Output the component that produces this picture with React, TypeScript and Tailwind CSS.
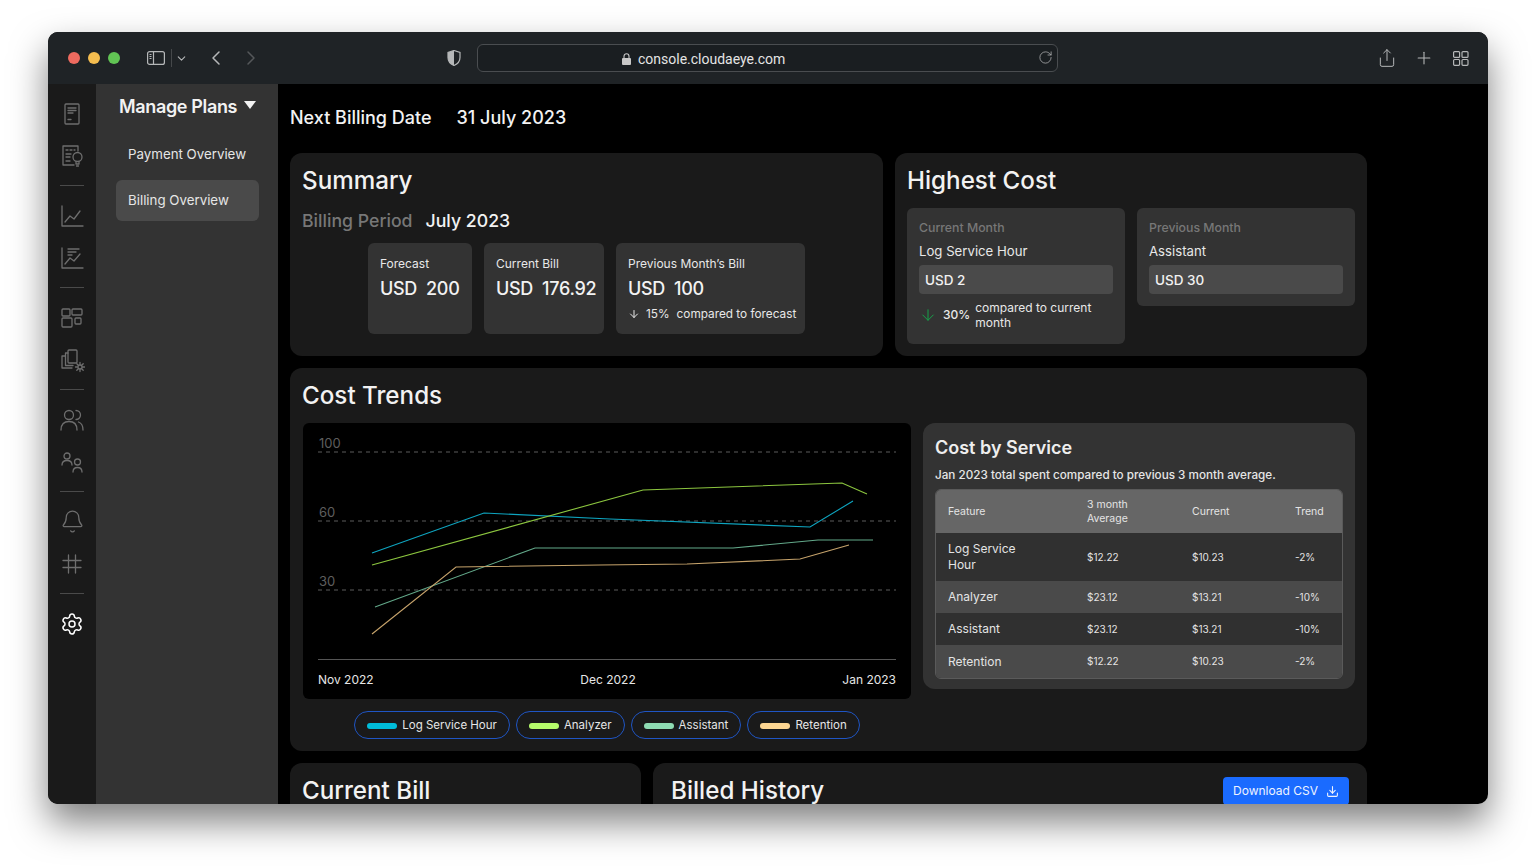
import { ArrowDown, Bell, ChevronDown, ChevronLeft, ChevronRight, Download, Plus, RotateCw, Settings, Share } from "lucide-react";
import type { ReactNode } from "react";

const font = "font-['Inter','Liberation_Sans',sans-serif]";

const Glyph = ({ children }: { children: ReactNode }) => (
  <svg width="26" height="26" viewBox="0 0 26 26" fill="none" stroke="currentColor" strokeWidth="1.3" strokeLinecap="round" strokeLinejoin="round">
    {children}
  </svg>
);

const DocIcon = () => (
  <Glyph>
    <rect x="6" y="3" width="14" height="20" rx="1" />
    <path d="M9 7h8M9 9.500h8M9 12h5M9 18.500h3" />
  </Glyph>
);

const DocBulbIcon = () => (
  <Glyph>
    <path d="M15 22H4V3h15v5" />
    <path d="M7 7h2M11 7h2M15 7h1M7 11h5M7 14h4M7 18h4" />
    <circle cx="18.500" cy="14" r="4.500" />
    <path d="M17 19.500v1.500h3v-1.500M17.500 23h2" />
  </Glyph>
);

const ChartIcon = () => (
  <Glyph>
    <path d="M3 3v20h21" />
    <path d="M6 19l5-6 4 3 6-8" />
  </Glyph>
);

const ChartListIcon = () => (
  <Glyph>
    <path d="M3 3v20h21" />
    <path d="M6 19l5-6 4 3 6-7" />
    <path d="M9 4h11M9 7h8M9 10h4" />
  </Glyph>
);

const TilesIcon = () => (
  <Glyph>
    <rect x="3" y="4" width="8" height="7" rx="1" />
    <rect x="13" y="4" width="10" height="6" rx="1" />
    <rect x="3" y="13" width="10" height="9" rx="1" />
    <rect x="16" y="13" width="6" height="6" rx="1" />
  </Glyph>
);

const CopiesGearIcon = () => (
  <Glyph>
    <rect x="9" y="3" width="9" height="13" rx="1" />
    <path d="M9 6H6.500v12.500H14M6.500 9H3v12h10" />
    <circle cx="21" cy="20" r="2" />
    <path d="M21 15.500v2M21 22.500v2M16.500 20h2M23.500 20h2M17.800 16.800l1.500 1.500M22.700 21.700l1.500 1.500M24.200 16.800l-1.500 1.500M19.300 21.700l-1.500 1.500" />
  </Glyph>
);

const UsersIcon = () => (
  <Glyph>
    <circle cx="10" cy="8" r="4.500" />
    <path d="M2 23c0-6 3-8.500 8-8.500s8 2.500 8 8.500" />
    <path d="M17 3.500a4.500 4.500 0 0 1 0 9M19.500 15c3 1 4.500 3.500 4.500 8" />
  </Glyph>
);

const PeopleIcon = () => (
  <Glyph>
    <circle cx="8" cy="7" r="3" />
    <path d="M3 16c0-3 2-4.500 5-4.500s5 1.500 5 4.500" />
    <circle cx="18.500" cy="13" r="3" />
    <path d="M14 23c0-3 1.800-4.500 4.500-4.500S23 20 23 23" />
  </Glyph>
);

const GridHashIcon = () => (
  <Glyph>
    <path d="M9.500 4v18M16.500 4v18M4 9.500h18M4 16.500h18" />
  </Glyph>
);

const railGroups: ReactNode[][] = [
  [<DocIcon />, <DocBulbIcon />],
  [<ChartIcon />, <ChartListIcon />],
  [<TilesIcon />, <CopiesGearIcon />],
  [<UsersIcon />, <PeopleIcon />],
  [<Bell size={25} strokeWidth={1.2} />, <GridHashIcon />],
];

const Rail = () => (
  <div className="flex w-12 shrink-0 flex-col items-center bg-[#1a1a1a] pt-[16.5px] text-[#6e6e6e]">
    {railGroups.map((group, i) => (
      <div key={i} className="flex flex-col items-center">
        <div className="flex flex-col items-center gap-4">
          {group.map((icon, j) => (
            <div key={j} className="flex h-[26px] w-[26px] items-center justify-center">
              {icon}
            </div>
          ))}
        </div>
        <div className="mb-[17px] mt-4 h-px w-6 bg-[#4a4a4a]" />
      </div>
    ))}
    <Settings size={24} strokeWidth={1.5} className="mt-px text-white" />
  </div>
);

const Toolbar = () => (
  <div className="flex h-[52px] shrink-0 items-center bg-[#1f2326] pl-5 text-[#b5b7b8]">
    <div className="flex gap-2">
      <div className="h-3 w-3 rounded-full bg-[#ee6a5f]" />
      <div className="h-3 w-3 rounded-full bg-[#f5bd4f]" />
      <div className="h-3 w-3 rounded-full bg-[#61c454]" />
    </div>
    <svg className="ml-[27px]" width="18" height="14" viewBox="0 0 18 14" fill="none" stroke="currentColor" strokeWidth="1.200">
      <rect x=".6" y=".6" width="16.800" height="12.800" rx="2" />
      <path d="M6.500 .6v12.800M2.500 3.500h2M2.500 5.500h2M2.500 7.500h2" />
    </svg>
    <div className="ml-[6px] h-[18px] w-px bg-[#45484a]" />
    <ChevronDown size={13} strokeWidth={2} className="ml-[3px]" />
    <ChevronLeft size={24} strokeWidth={1.5} className="ml-4" />
    <ChevronRight size={24} strokeWidth={1.5} className="ml-[11px] text-[#55585a]" />
    <svg className="ml-[184px]" width="14" height="16" viewBox="0 0 14 16">
      <path d="M7 .5 1 2.500v5c0 4 2.500 6.500 6 8 3.500-1.500 6-4 6-8v-5z" fill="none" stroke="#b5b7b8" strokeWidth="1.200" />
      <path d="M7 .5 1 2.500v5c0 4 2.500 6.500 6 8z" fill="#b5b7b8" />
    </svg>
    <div className="relative ml-4 flex h-7 w-[581px] items-center rounded-md border border-[#4a4d50] bg-[#1a1e21] pl-[144px] pt-[2px]">
      <svg className="mr-[7px]" width="9" height="12" viewBox="0 0 9 12">
        <path d="M2 5.500V3.200a2.500 2.500 0 0 1 5 0v2.300" fill="none" stroke="#c8c8c8" strokeWidth="1.100" />
        <rect y="5" width="9" height="7" rx="1" fill="#c8c8c8" />
      </svg>
      <span className="font-['Roboto',sans-serif] text-[14px] text-[#e4e4e4]">console.cloudaeye.com</span>
      <RotateCw size={15} strokeWidth={1.2} className="absolute right-[4px] top-[5px]" />
    </div>
    <Share size={20} strokeWidth={1.2} className="ml-[319px]" />
    <Plus size={20} strokeWidth={1.3} className="ml-[17px]" />
    <svg className="ml-[19px]" width="16" height="15" viewBox="0 0 16 15" fill="none" stroke="currentColor" strokeWidth="1.200">
      <rect x=".6" y=".6" width="6" height="5.800" rx="1" />
      <rect x="9" y=".6" width="6" height="5.800" rx="1" />
      <rect x=".6" y="8.500" width="6" height="5.800" rx="1" />
      <rect x="9" y="8.500" width="6" height="5.800" rx="1" />
    </svg>
  </div>
);

const Sidebar = () => (
  <div className="flex w-[182px] shrink-0 flex-col bg-[#333333] px-5 pt-[9px]">
    <div className="flex h-[26px] items-center whitespace-nowrap pl-[3px] text-[18px] font-semibold tracking-[-0.35px] text-[#f2f2f2]">
      Manage Plans
      <svg className="mb-[3px] ml-[7px]" width="12" height="8" viewBox="0 0 12 8"><path d="M0 0h12L6 8z" fill="#f2f2f2" /></svg>
    </div>
    <div className="mt-[25px] pl-3 text-[13.300px] leading-5 text-[#e6e6e6]">Payment Overview</div>
    <div className="mt-4 flex h-[41px] w-[143px] items-center rounded-md bg-[#4a4a4a] pl-3 text-[13.300px] text-[#e6e6e6]">Billing Overview</div>
  </div>
);

const Card = ({ className, children }: { className: string; children: ReactNode }) => (
  <section className={`rounded-xl bg-[#1a1a1a] ${className}`}>{children}</section>
);

const CardTitle = ({ children }: { children: ReactNode }) => (
  <h2 className="text-[24.200px] font-medium leading-8 text-[#f2f2f2]">{children}</h2>
);

const Stat = ({ label, value, amount, note }: { label: string; value?: string; amount: string; note?: boolean }) => (
  <div className="h-[91px] rounded-md bg-[#333333] px-3 pt-3 text-[#e8e8e8]">
    <div className="whitespace-nowrap text-[12px] leading-[18px]">{label}</div>
    <div className="mt-[3px] flex gap-[9px] whitespace-nowrap text-[18px] font-medium leading-[26px] tracking-[-0.3px] text-[#f2f2f2]">
      <span>{value}</span>
      <span>{amount}</span>
    </div>
    {note && (
      <div className="mt-1 flex items-center whitespace-nowrap text-[11.800px] leading-4">
        <ArrowDown size={12} className="mr-[6px] shrink-0" />
        <span className="mr-[7px]">15%</span>
        <span>compared to forecast</span>
      </div>
    )}
  </div>
);

const Summary = () => (
  <Card className="h-[203px] w-[593px] px-3 pt-3">
    <CardTitle>Summary</CardTitle>
    <div className="mt-[10px] flex items-center gap-[13px] text-[17.700px] font-medium leading-7">
      <span className="text-[#777777]">Billing Period</span>
      <span className="text-[#f2f2f2]">July 2023</span>
    </div>
    <div className="mt-2 flex justify-center gap-3">
      <div className="w-[104px]"><Stat label="Forecast" value="USD" amount="200" /></div>
      <div className="w-[120px]"><Stat label="Current Bill" value="USD" amount="176.92" /></div>
      <div className="w-[189px]"><Stat label="Previous Month’s Bill" value="USD" amount="100" note /></div>
    </div>
  </Card>
);

const CostBox = ({ period, name, amount, children }: { period: string; name: string; amount: string; children?: ReactNode }) => (
  <div className="w-[218px] self-start rounded-md bg-[#333333] px-3 pb-3 pt-[11px]">
    <div className="text-[12.300px] font-medium leading-[18px] text-[#777777]">{period}</div>
    <div className="mt-[5px] text-[13.200px] leading-[18px] text-[#e8e8e8]">{name}</div>
    <div className="mt-[5px] flex h-[29px] items-center rounded-sm bg-[#4a4a4a] pl-[6px] pt-px text-[13.500px] font-medium text-[#f2f2f2]">{amount}</div>
    {children}
  </div>
);

const HighestCost = () => (
  <Card className="h-[203px] w-[472px] px-3 pt-3">
    <CardTitle>Highest Cost</CardTitle>
    <div className="mt-[11px] flex gap-3">
      <CostBox period="Current Month" name="Log Service Hour" amount="USD 2">
        <div className="mb-[2px] mt-[6px] flex items-center text-[#e8e8e8]">
          <ArrowDown size={18} strokeWidth={1.300} className="shrink-0 text-[#16a34a]" />
          <span className="ml-[6px] text-[12px] font-medium">30%</span>
          <span className="ml-[5px] w-[130px] text-[12px] leading-[15px]">compared to current month</span>
        </div>
      </CostBox>
      <CostBox period="Previous Month" name="Assistant" amount="USD 30" />
    </div>
  </Card>
);

const series = [
  { color: "#0ea5c0", points: "69,130 181,90 307,96 507,104 550,78" },
  { color: "#8cc63f", points: "69,142 340,67 539,60 564,71" },
  { color: "#63a98a", points: "72,184 232,125 430,125 515,117 570,117" },
  { color: "#c6a36b", points: "69,211 153,144 297,142 384,141 497,136 546,122" },
];

const TrendChart = () => (
  <div className="flex h-[276px] flex-col rounded-md bg-black px-[15px]">
    <svg className="-mx-[15px] shrink-0" width="608" height="237" viewBox="0 0 608 237" fill="none">
      {[
        ["100", 29],
        ["60", 98],
        ["30", 167],
      ].map(([label, y]) => (
        <g key={label}>
          <text x="16" y={Number(y) - 4} fill="#5e5e5e" fontSize="13" fontFamily="Inter, sans-serif">{label}</text>
          <line x1="15" x2="593" y1={y} y2={y} stroke="#5c5c5c" strokeDasharray="4 4" />
        </g>
      ))}
      <line x1="15" x2="593" y1="236.500" y2="236.500" stroke="#555555" />
      {series.map((s) => (
        <polyline key={s.color} points={s.points} stroke={s.color} strokeWidth="1.100" />
      ))}
    </svg>
    <div className="mt-[11px] flex justify-between text-[12px] leading-[18px] text-[#e6e6e6]">
      <span>Nov 2022</span>
      <span>Dec 2022</span>
      <span>Jan 2023</span>
    </div>
  </div>
);

const legend = [
  { name: "Log Service Hour", swatch: "bg-[#00bcd9]" },
  { name: "Analyzer", swatch: "bg-[#b5fb6a]" },
  { name: "Assistant", swatch: "bg-[#8edbb2]" },
  { name: "Retention", swatch: "bg-[#fdd692]" },
];

const rows = [
  { feature: "Log Service Hour", avg: "$12.22", current: "$10.23", trend: "-2%", cls: "h-[48px] bg-[#303030]" },
  { feature: "Analyzer", avg: "$23.12", current: "$13.21", trend: "-10%", cls: "h-[32px] bg-[#4a4a4a]" },
  { feature: "Assistant", avg: "$23.12", current: "$13.21", trend: "-10%", cls: "h-[32px] bg-[#303030]" },
  { feature: "Retention", avg: "$12.22", current: "$10.23", trend: "-2%", cls: "h-[33px] bg-[#4a4a4a]" },
];

const gridCols = "grid grid-cols-[139px_105px_103px_1fr] items-center pl-3";

const CostByService = () => (
  <div className="h-[266px] w-[432px] rounded-xl bg-[#333333] px-3 pt-3">
    <h3 className="text-[18px] font-semibold leading-[26px] text-[#eeeeee]">Cost by Service</h3>
    <p className="mt-[6px] whitespace-nowrap text-[11.700px] font-medium leading-4 text-[#e6e6e6]">Jan 2023 total spent compared to previous 3 month average.</p>
    <div className="mt-[6px] overflow-hidden rounded-md border border-[#5a5a5a] text-[#e4e4e4]">
      <div className={`${gridCols} h-[43px] bg-[#666666] text-[10.500px] leading-[13.500px]`}>
        <span>Feature</span>
        <span className="w-[60px]">3 month Average</span>
        <span>Current</span>
        <span>Trend</span>
      </div>
      {rows.map((r) => (
        <div key={r.feature} className={`${gridCols} ${r.cls} text-[10px]`}>
          <span className="w-[85px] text-[12px] leading-4">{r.feature}</span>
          <span>{r.avg}</span>
          <span>{r.current}</span>
          <span>{r.trend}</span>
        </div>
      ))}
    </div>
  </div>
);

const CostTrends = () => (
  <Card className="h-[383px] px-3 pt-3">
    <CardTitle>Cost Trends</CardTitle>
    <div className="ml-px mt-[11px] flex gap-3">
      <div className="w-[608px]">
        <TrendChart />
        <div className="mt-3 flex justify-center gap-[6px]">
          {legend.map((l) => (
            <div key={l.name} className="flex h-7 items-center gap-[5px] rounded-full border border-[#1f55c4] px-3 pt-px text-[11.500px] text-[#e6e6e6]">
              <span className={`h-[6px] w-[30px] rounded-full ${l.swatch}`} />
              <span className="whitespace-nowrap">{l.name}</span>
            </div>
          ))}
        </div>
      </div>
      <CostByService />
    </div>
  </Card>
);

const App = () => (
  <div className={`h-[868px] overflow-hidden bg-white pl-12 pt-8 ${font}`}>
    <div className="flex h-[772px] w-[1440px] flex-col overflow-hidden rounded-[10px] bg-black shadow-[0_18px_36px_rgba(0,0,0,0.5)]">
      <Toolbar />
      <div className="flex min-h-0 flex-1">
        <Rail />
        <Sidebar />
        <main className="w-[1089px] overflow-hidden pl-3">
          <div className="flex h-[69px] items-center gap-[25px] pb-[2px] text-[18px] font-medium text-[#f2f2f2]">
            <span>Next Billing Date</span>
            <span>31 July 2023</span>
          </div>
          <div className="flex flex-col gap-3">
            <div className="flex gap-3">
              <Summary />
              <HighestCost />
            </div>
            <CostTrends />
            <div className="flex gap-3">
              <Card className="h-[120px] w-[351px] px-3 pt-3">
                <CardTitle>Current Bill</CardTitle>
              </Card>
              <Card className="h-[120px] w-[714px] px-[18px] pt-3">
                <div className="flex items-start justify-between">
                  <CardTitle>Billed History</CardTitle>
                  <button className="mt-[2px] flex h-7 w-[126px] items-center justify-center gap-[8px] rounded-sm bg-[#1a6bff] text-[12px] text-[#eef3ff]">
                    Download CSV
                    <Download size={13} />
                  </button>
                </div>
              </Card>
            </div>
          </div>
        </main>
      </div>
    </div>
  </div>
);

export default App;
